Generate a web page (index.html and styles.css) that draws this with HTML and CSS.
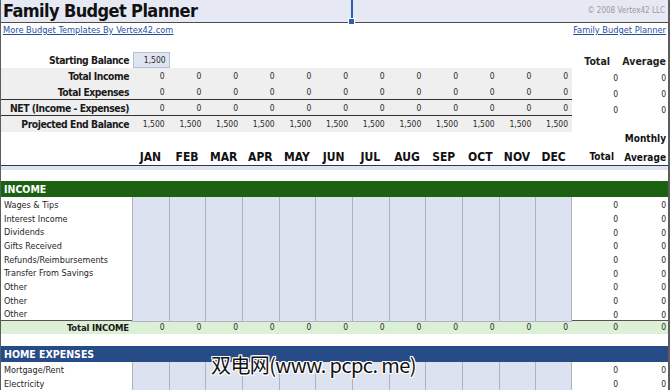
FILE: index.html
```html
<!DOCTYPE html>
<html>
<head>
<meta charset="utf-8">
<link rel="stylesheet" href="styles.css">
</head>
<body>
<div class="sheet">
  <div class="title-row">
    <div class="title-cell">Family Budget Planner</div>
    <div class="copy">© 2008 Vertex42 LLC</div>
  </div>
  <div class="link-row">
    <a href="#">More Budget Templates By Vertex42.com</a>
    <a href="#">Family Budget Planner</a>
  </div>
  <div class="gap-15"></div>

  <div class="row r16">
    <div class="main">
      <div class="c lb">Starting Balance</div>
      <div class="c box">1,500</div>
      <div></div><div></div><div></div><div></div><div></div><div></div><div></div><div></div><div></div><div></div><div></div>
    </div>
    <div class="side">
      <div class="c hd hd-total">Total</div>
      <div class="c hd">Average</div>
    </div>
  </div>

  <div class="row r16">
    <div class="main gray">
      <div class="c lb">Total Income</div>
      <div class="c v">0</div><div class="c v">0</div><div class="c v">0</div><div class="c v">0</div><div class="c v">0</div><div class="c v">0</div><div class="c v">0</div><div class="c v">0</div><div class="c v">0</div><div class="c v">0</div><div class="c v">0</div><div class="c v">0</div>
    </div>
    <div class="side low">
      <div class="c sv">0</div><div class="c sv">0</div>
    </div>
  </div>

  <div class="row r16">
    <div class="main gray line">
      <div class="c lb">Total Expenses</div>
      <div class="c v">0</div><div class="c v">0</div><div class="c v">0</div><div class="c v">0</div><div class="c v">0</div><div class="c v">0</div><div class="c v">0</div><div class="c v">0</div><div class="c v">0</div><div class="c v">0</div><div class="c v">0</div><div class="c v">0</div>
    </div>
    <div class="side low">
      <div class="c sv">0</div><div class="c sv">0</div>
    </div>
  </div>

  <div class="row r16">
    <div class="main gray line">
      <div class="c lb">NET (Income - Expenses)</div>
      <div class="c v">0</div><div class="c v">0</div><div class="c v">0</div><div class="c v">0</div><div class="c v">0</div><div class="c v">0</div><div class="c v">0</div><div class="c v">0</div><div class="c v">0</div><div class="c v">0</div><div class="c v">0</div><div class="c v">0</div>
    </div>
    <div class="side low">
      <div class="c sv">0</div><div class="c sv">0</div>
    </div>
  </div>

  <div class="row r16">
    <div class="main gray">
      <div class="c lb">Projected End Balance</div>
      <div class="c v">1,500</div><div class="c v">1,500</div><div class="c v">1,500</div><div class="c v">1,500</div><div class="c v">1,500</div><div class="c v">1,500</div><div class="c v">1,500</div><div class="c v">1,500</div><div class="c v">1,500</div><div class="c v">1,500</div><div class="c v">1,500</div><div class="c v">1,500</div>
    </div>
    <div class="side"></div>
  </div>

  <div class="row months">
    <div class="main">
      <div></div>
      <div class="m">JAN</div><div class="m">FEB</div><div class="m">MAR</div><div class="m">APR</div><div class="m">MAY</div><div class="m">JUN</div><div class="m">JUL</div><div class="m">AUG</div><div class="m">SEP</div><div class="m">OCT</div><div class="m">NOV</div><div class="m">DEC</div>
    </div>
    <div class="side">
      <div class="c mh mh-total">Total</div>
      <div class="c mh mh-avg">Monthly<br>Average</div>
    </div>
  </div>
  <div class="band"></div>
  <div class="gap-11"></div>

  <div class="sec green">INCOME</div>

  <div class="row item">
    <div class="main"><div class="il">Wages &amp; Tips</div><div class="in"></div><div class="in"></div><div class="in"></div><div class="in"></div><div class="in"></div><div class="in"></div><div class="in"></div><div class="in"></div><div class="in"></div><div class="in"></div><div class="in"></div><div class="in"></div></div>
    <div class="side"><div class="c sv">0</div><div class="c sv">0</div></div>
  </div>
  <div class="row item">
    <div class="main"><div class="il">Interest Income</div><div class="in"></div><div class="in"></div><div class="in"></div><div class="in"></div><div class="in"></div><div class="in"></div><div class="in"></div><div class="in"></div><div class="in"></div><div class="in"></div><div class="in"></div><div class="in"></div></div>
    <div class="side"><div class="c sv">0</div><div class="c sv">0</div></div>
  </div>
  <div class="row item">
    <div class="main"><div class="il">Dividends</div><div class="in"></div><div class="in"></div><div class="in"></div><div class="in"></div><div class="in"></div><div class="in"></div><div class="in"></div><div class="in"></div><div class="in"></div><div class="in"></div><div class="in"></div><div class="in"></div></div>
    <div class="side"><div class="c sv">0</div><div class="c sv">0</div></div>
  </div>
  <div class="row item">
    <div class="main"><div class="il">Gifts Received</div><div class="in"></div><div class="in"></div><div class="in"></div><div class="in"></div><div class="in"></div><div class="in"></div><div class="in"></div><div class="in"></div><div class="in"></div><div class="in"></div><div class="in"></div><div class="in"></div></div>
    <div class="side"><div class="c sv">0</div><div class="c sv">0</div></div>
  </div>
  <div class="row item">
    <div class="main"><div class="il">Refunds/Reimbursements</div><div class="in"></div><div class="in"></div><div class="in"></div><div class="in"></div><div class="in"></div><div class="in"></div><div class="in"></div><div class="in"></div><div class="in"></div><div class="in"></div><div class="in"></div><div class="in"></div></div>
    <div class="side"><div class="c sv">0</div><div class="c sv">0</div></div>
  </div>
  <div class="row item">
    <div class="main"><div class="il">Transfer From Savings</div><div class="in"></div><div class="in"></div><div class="in"></div><div class="in"></div><div class="in"></div><div class="in"></div><div class="in"></div><div class="in"></div><div class="in"></div><div class="in"></div><div class="in"></div><div class="in"></div></div>
    <div class="side"><div class="c sv">0</div><div class="c sv">0</div></div>
  </div>
  <div class="row item">
    <div class="main"><div class="il">Other</div><div class="in"></div><div class="in"></div><div class="in"></div><div class="in"></div><div class="in"></div><div class="in"></div><div class="in"></div><div class="in"></div><div class="in"></div><div class="in"></div><div class="in"></div><div class="in"></div></div>
    <div class="side"><div class="c sv">0</div><div class="c sv">0</div></div>
  </div>
  <div class="row item">
    <div class="main"><div class="il">Other</div><div class="in"></div><div class="in"></div><div class="in"></div><div class="in"></div><div class="in"></div><div class="in"></div><div class="in"></div><div class="in"></div><div class="in"></div><div class="in"></div><div class="in"></div><div class="in"></div></div>
    <div class="side"><div class="c sv">0</div><div class="c sv">0</div></div>
  </div>
  <div class="row item">
    <div class="main"><div class="il">Other</div><div class="in"></div><div class="in"></div><div class="in"></div><div class="in"></div><div class="in"></div><div class="in"></div><div class="in"></div><div class="in"></div><div class="in"></div><div class="in"></div><div class="in"></div><div class="in"></div></div>
    <div class="side"><div class="c sv">0</div><div class="c sv">0</div></div>
  </div>

  <div class="row total">
    <div class="main">
      <div class="c lb tl">Total INCOME</div>
      <div class="c v">0</div><div class="c v">0</div><div class="c v">0</div><div class="c v">0</div><div class="c v">0</div><div class="c v">0</div><div class="c v">0</div><div class="c v">0</div><div class="c v">0</div><div class="c v">0</div><div class="c v">0</div><div class="c v">0</div>
    </div>
    <div class="side"><div class="c sv">0</div><div class="c sv">0</div></div>
  </div>
  <div class="gap-12"></div>

  <div class="sec navy">HOME EXPENSES</div>
  <div class="row item">
    <div class="main"><div class="il">Mortgage/Rent</div><div class="in"></div><div class="in"></div><div class="in"></div><div class="in"></div><div class="in"></div><div class="in"></div><div class="in"></div><div class="in"></div><div class="in"></div><div class="in"></div><div class="in"></div><div class="in"></div></div>
    <div class="side"><div class="c sv">0</div><div class="c sv">0</div></div>
  </div>
  <div class="row item">
    <div class="main"><div class="il">Electricity</div><div class="in"></div><div class="in"></div><div class="in"></div><div class="in"></div><div class="in"></div><div class="in"></div><div class="in"></div><div class="in"></div><div class="in"></div><div class="in"></div><div class="in"></div><div class="in"></div></div>
    <div class="side"><div class="c sv">0</div><div class="c sv">0</div></div>
  </div>

  <div class="watermark">双电网(www. pcpc. me)</div>
</div>
</body>
</html>
```

FILE: styles.css
```css
* { box-sizing: border-box; margin: 0; padding: 0; }
html, body { margin: 0; background: #fff; }
body {
  width: 670px;
  height: 390px;
  overflow: hidden;
  font-family: "DejaVu Sans Condensed", "DejaVu Sans", sans-serif;
  color: #1e1e1e;
}
.sheet {
  position: relative;
  width: 670px;
  height: 390px;
  overflow: hidden;
  border-left: 1px solid #5c5c5c;
  border-right: 2px solid #5c5c5c;
}

/* title */
.title-row {
  display: flex;
  height: 23px;
  background: #e6e9f3;
  border-bottom: 1px solid #4d4d4d;
}
.title-cell {
  position: relative;
  flex: 0 0 352px;
  height: 22px;
  border-right: 2px solid #2f5fae;
  font-weight: bold;
  font-size: 18px;
  line-height: 22px;
  padding-left: 2px;
  letter-spacing: -0.6px;
  color: #111;
}
.title-cell::after {
  content: "";
  position: absolute;
  right: -4px;
  bottom: -3px;
  width: 5px;
  height: 5px;
  background: #2f5fae;
  border: 1px solid #fff;
}
.copy {
  flex: 1;
  text-align: right;
  font-size: 8px;
  line-height: 22px;
  color: #9a9a9a;
  padding-right: 3px;
}

.link-row {
  display: flex;
  justify-content: space-between;
  height: 14px;
  padding: 0 2px 0 2px;
  font-size: 9.2px;
  line-height: 14px;
}
.link-row a { color: #1f4fa0; text-decoration: underline; }

.gap-15 { height: 15px; }
.gap-11 { height: 11px; }
.gap-12 { height: 12px; }

/* grid rows */
.row { display: flex; }
.main {
  width: 571px;
  display: grid;
  grid-template-columns: 131px repeat(12, 1fr);
}
.side {
  width: 96px;
  display: grid;
  grid-template-columns: 48px 48px;
}
.c {
  display: flex;
  align-items: center;
  justify-content: flex-end;
  white-space: nowrap;
}
.r16 { height: 16px; }
.r16 .main, .r16 .side { height: 16px; }
.gray { background: #efefef; }
.line { border-bottom: 1px solid #333; }

.lb {
  font-weight: bold;
  font-size: 10.3px;
  letter-spacing: -0.45px;
  padding-right: 3px;
  color: #1a1a1a;
}
.v {
  font-size: 8.5px;
  padding-right: 4px;
  color: #2a2a2a;
}
.box {
  margin-left: 1px;
  margin-right: -1px;
  background: #dfe4f1;
  border: 1px solid #b8bfcf;
  font-size: 8.5px;
  padding-right: 3px;
  color: #2a2a2a;
}
.hd {
  font-weight: bold;
  font-size: 10.5px;
  padding-right: 2px;
  padding-top: 2px;
}
.hd-total { padding-right: 10px; }
.side.low .sv { padding-top: 4px; }
.sv {
  font-size: 8.5px;
  padding-right: 2px;
  color: #2a2a2a;
}

/* months header */
.months {
  height: 34px;
  border-bottom: 1px solid #2c3858;
}
.months .main { height: 33px; }
.months .side {
  height: 33px;
  grid-template-rows: 33px;
}
.m {
  display: flex;
  align-items: flex-end;
  justify-content: center;
  font-weight: bold;
  font-size: 12px;
  padding-bottom: 1px;
  color: #111;
}
.mh {
  align-items: flex-end;
  align-self: start;
  min-height: 0;
  font-weight: bold;
  font-size: 10px;
  color: #111;
}
.mh-total {
  height: 33px;
  line-height: 12px;
  padding-right: 6px;
  padding-bottom: 2px;
}
.mh-avg {
  height: 35px;
  text-align: right;
  line-height: 19px;
  padding-right: 2px;
}
.band { height: 4px; background: #dfe3ee; }

/* sections */
.sec {
  height: 16px;
  line-height: 16px;
  color: #fff;
  font-weight: bold;
  font-size: 10.5px;
  padding-left: 3px;
}
.green { background: #1c6112; }
.navy { background: #274b87; }

.item { height: 13.667px; }
.item .main, .item .side { height: 13.667px; }
.il {
  font-size: 9px;
  line-height: 13.667px;
  padding-left: 3px;
  padding-top: 2px;
  white-space: nowrap;
  color: #1e1e1e;
}
.item .sv { padding-top: 3px; }
.in {
  background: #dde2f0;
  border-left: 1px solid #aeb3c2;
  border-bottom: 1px solid #aeb3c2;
}
.in:last-child { border-right: 1px solid #aeb3c2; }

.total {
  height: 14px;
  background: #dbf0d4;
  border-top: 1px solid #555;
}
.total .main, .total .side { height: 13px; }
.tl { font-size: 9.5px; letter-spacing: -0.2px; }

.watermark {
  position: absolute;
  left: 210px;
  top: 352px;
  font-family: "Noto Sans CJK SC", sans-serif;
  font-size: 20px;
  line-height: 26px;
  color: #111;
  letter-spacing: -0.6px;
  text-shadow: 1px 0 0 #fff, -1px 0 0 #fff, 0 1px 0 #fff, 0 -1px 0 #fff,
    1px 1px 0 #fff, -1px -1px 0 #fff, 1px -1px 0 #fff, -1px 1px 0 #fff;
}
```
